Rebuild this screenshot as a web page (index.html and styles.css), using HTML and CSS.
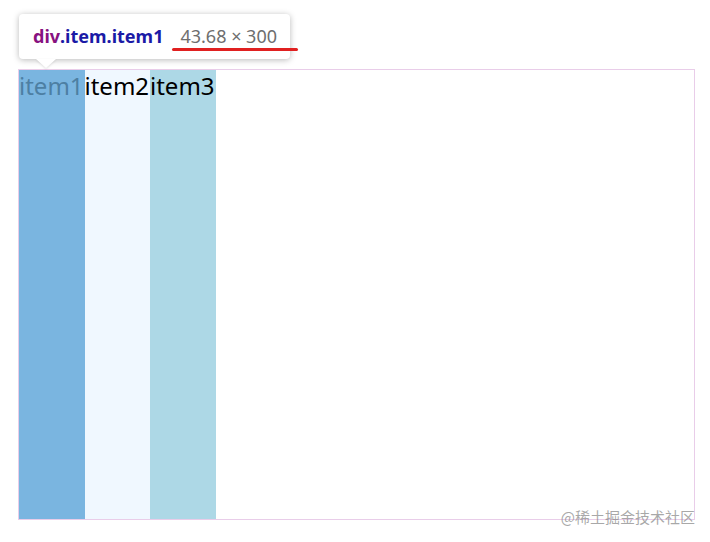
FILE: index.html
```html
<!DOCTYPE html>
<html lang="zh">
<head>
<meta charset="utf-8">
<link rel="stylesheet" href="styles.css">
</head>
<body>
  <div class="container">
    <div class="item item1">item1</div>
    <div class="item item2">item2</div>
    <div class="item item3">item3</div>
  </div>
  <div class="tooltip">
    <span class="tag">div</span><span class="cls">.item.item1</span>
    <span class="size">43.68 × 300</span>
    <span class="mark"></span>
  </div>
  <div class="watermark">@稀土掘金技术社区</div>
</body>
</html>
```
FILE: styles.css
```css
html, body {
  margin: 0;
  padding: 0;
  background: #fff;
}
body {
  position: relative;
  width: 710px;
  height: 542px;
  overflow: hidden;
  font-family: "Noto Sans", "Noto Sans CJK SC", sans-serif;
}
.container {
  margin: 69px 0 0 18px;
  width: 675px;
  height: 449px;
  border: 1px solid #e9cde9;
  display: flex;
}
.item {
  width: 65.5px;
  flex: none;
  font-size: 24px;
  line-height: 32px;
  color: #000;
  white-space: nowrap;
}
.item1 {
  background: #7ab5e0;
  color: #4d7fa3;
}
.item2 {
  background: #f0f8ff;
}
.item3 {
  background: #add8e6;
}
.tooltip {
  position: absolute;
  left: 19px;
  top: 14px;
  width: 271px;
  height: 45px;
  box-sizing: border-box;
  background: #fff;
  border-radius: 4px;
  box-shadow: 0 1px 6px rgba(0, 0, 0, 0.28);
  padding: 0 0 2px 14px;
  display: flex;
  align-items: center;
  font-size: 18px;
  white-space: nowrap;
}
.tooltip::after {
  content: "";
  position: absolute;
  left: 17px;
  bottom: -9px;
  border-left: 10px solid transparent;
  border-right: 10px solid transparent;
  border-top: 9px solid #fff;
  filter: drop-shadow(0 1px 1px rgba(0,0,0,0.12));
}
.tag {
  font-weight: 700;
  color: #881280;
}
.cls {
  font-weight: 700;
  color: #1a1aa6;
}
.size {
  color: #6e6e6e;
  margin-left: 17px;
}
.mark {
  position: absolute;
  left: 153px;
  top: 34px;
  width: 126px;
  height: 3px;
  border-radius: 2px;
  background: #e02020;
}
.watermark {
  position: absolute;
  right: 15px;
  top: 506px;
  font-size: 15px;
  line-height: 22px;
  color: rgba(140, 140, 140, 0.75);
  font-family: "Noto Sans CJK SC", sans-serif;
}
```
